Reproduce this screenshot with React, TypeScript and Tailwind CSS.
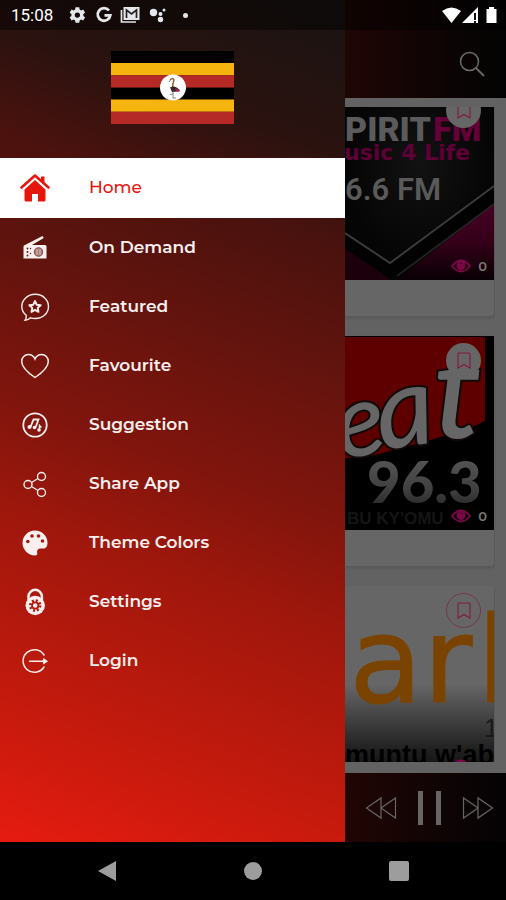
import type { ReactNode } from "react";

type Item = { label: string; icon: ReactNode };

const line = { fill: "none", stroke: "currentColor", strokeWidth: 1.5 } as const;

function Icon({ children }: { children: ReactNode }) {
  return (
    <svg viewBox="0 0 30 30" className="size-[30px] shrink-0" aria-hidden="true">
      {children}
    </svg>
  );
}

const home = (
  <Icon>
    <path d="M1.500 14.500 15 2.500l13.500 12" fill="none" stroke="currentColor" strokeWidth="2.600" strokeLinecap="round" strokeLinejoin="round" />
    <path d="M21 3.500h3.500v7L21 7z" fill="currentColor" />
    <path d="M15 7 4.500 16.500V27q0 1.500 1.500 1.500h6V21h6v7.500h6q1.500 0 1.500-1.500V16.500z" fill="currentColor" />
  </Icon>
);

const items: Item[] = [
  {
    label: "On Demand",
    icon: (
      <Icon>
        <path d="M5 12 22.500 3l1.200 2L12 12h13q1.500 0 1.500 1.500v12H3.500V13.500Q3.500 12 5 12z" fill="currentColor" />
        <circle cx="18.500" cy="19" r="4.600" fill="#a67a78" />
        <circle cx="18.500" cy="19" r="4.200" fill="none" stroke="#8d4f4c" strokeWidth="1" />
        <path d="M17 16v6M20 16v6" stroke="#d9c3c2" strokeWidth="1" />
        <g fill="#611612">
          <circle cx="7.500" cy="15.500" r=".9" />
          <circle cx="10.500" cy="15.500" r=".7" />
          <circle cx="7.500" cy="19" r=".9" />
          <circle cx="7.500" cy="22.500" r=".9" />
          <circle cx="10.500" cy="20.500" r=".7" />
        </g>
      </Icon>
    ),
  },
  {
    label: "Featured",
    icon: (
      <Icon>
        <path d="M6.200 23.200C3.500 21 1.800 18 1.800 14.500 1.800 8 7.500 2.300 15.200 2.300s13.300 5.500 13.300 12.200-5.700 12-13.300 12q-2.500 0-4.700-.7-2.500 2.500-5.500 2.500 1.700-2.300 1.200-5.100z" {...line} strokeWidth={1.4} />
        <path d="m15 9 1.700 3.700 4 .5-3 2.700.8 4-3.500-2-3.500 2 .8-4-3-2.700 4-.5z" {...line} strokeWidth={1.9} strokeLinejoin="round" />
      </Icon>
    ),
  },
  {
    label: "Favourite",
    icon: (
      <Icon>
        <path d="M15 26.500C9 22.500 1.700 17 1.700 10.500c0-4 3-7 6.600-7 3 0 5.500 1.700 6.700 4.500 1.200-2.800 3.700-4.500 6.700-4.500 3.600 0 6.600 3 6.600 7 0 6.500-7.300 12-13.300 16z" {...line} />
      </Icon>
    ),
  },
  {
    label: "Suggestion",
    icon: (
      <Icon>
        <circle cx="15" cy="15" r="11.700" {...line} strokeWidth={1.8} />
        <path d="m10.500 17 3-7.500h5l-3 8" {...line} strokeWidth={1.8} />
        <circle cx="9.500" cy="17" r="2" fill="currentColor" />
        <circle cx="14.500" cy="17.500" r="1.800" fill="currentColor" />
        <path d="M19.500 20v-4.500l2 2" {...line} />
        <circle cx="19" cy="20" r="1.800" fill="currentColor" />
      </Icon>
    ),
  },
  {
    label: "Share App",
    icon: (
      <Icon>
        <g {...line} strokeWidth={1.4}>
          <circle cx="8" cy="15.500" r="4" />
          <circle cx="21.500" cy="7.500" r="4" />
          <circle cx="21.500" cy="23.500" r="4" />
          <path d="m11.500 13.500 6.500-4M11.500 17.500l6.500 4" />
        </g>
      </Icon>
    ),
  },
  {
    label: "Theme Colors",
    icon: (
      <Icon>
        <path d="M15 2.500C8 2.500 2.500 8 2.500 15c0 6.500 5.500 12.500 12.500 12.500 2 0 2.500-1 2.200-2.500-.6-3 .8-4.500 3.300-4.500h3c2.800 0 4-2.500 4-5.500 0-7-5.500-12.500-12.500-12.500z" fill="currentColor" />
        <g fill="#a5170f">
          <circle cx="7.800" cy="13.500" r="1.800" />
          <circle cx="12" cy="8" r="1.800" />
          <circle cx="18.500" cy="8" r="1.800" />
          <circle cx="22.500" cy="13" r="1.800" />
        </g>
      </Icon>
    ),
  },
  {
    label: "Settings",
    icon: (
      <Icon>
        <path d="M8.500 13V9.500a6.700 6.700 0 0 1 13.400 0V13" fill="none" stroke="currentColor" strokeWidth="2.500" />
        <circle cx="15.200" cy="18.500" r="9.700" fill="currentColor" />
        <circle cx="15.200" cy="18.500" r="3.200" fill="none" stroke="#b0180f" strokeWidth="1.800" />
        <circle cx="15.200" cy="18.500" r="5" fill="none" stroke="#b0180f" strokeWidth="2.500" strokeDasharray="1.960 1.967" />
      </Icon>
    ),
  },
  {
    label: "Login",
    icon: (
      <Icon>
        <path d="M24 9A11.300 11.300 0 1 0 24 21" {...line} strokeLinecap="round" />
        <path d="M9.500 15.200h15" {...line} strokeLinecap="round" />
        <path d="m23.500 12 4.500 3.200-4.500 3.200-1-3.200z" fill="currentColor" />
      </Icon>
    ),
  },
];

function Flag() {
  return (
    <svg viewBox="0 0 123 73" className="h-[73px] w-[123px]" role="img" aria-label="Uganda">
      <path d="M0 0h123v12H0zM0 36.500h123v12H0z" fill="#000" />
      <path d="M0 12h123v12.300H0zM0 48.500h123v12.300H0z" fill="#f6b40e" />
      <path d="M0 24.300h123v12.200H0zM0 60.800h123V73H0z" fill="#b52a26" />
      <circle cx="62" cy="36.500" r="13" fill="#fff" />
      <path d="M59 29q3-3 4 0-1.500 4-1.500 8" fill="none" stroke="#8a6433" strokeWidth="1.500" />
      <path d="M59 29.500 58 31" stroke="#555" />
      <path d="M59 36.500q5-3 10 3l-2 1-6 .5z" fill="#38282a" />
      <path d="m64 37 5.500 3.500-4 0z" fill="#c01842" />
      <path d="M62 41v6m0-4-3 .5M62 47h3" fill="none" stroke="#777" strokeWidth=".9" />
    </svg>
  );
}

function StatusBar() {
  return (
    <header className="absolute inset-x-0 top-0 z-10 flex h-[30px] items-center bg-black/45 pr-2 pl-[11px] text-white">
      <time className="w-[57px] font-[Roboto,sans-serif] text-[17px] leading-[30px]">15:08</time>
      <svg viewBox="0 0 24 24" className="size-[18px] text-gray-200" aria-hidden="true">
        <path fill="currentColor" fillRule="evenodd" d="M20.400 13.200a8 8 0 0 0 0-2.400l2.400-1.900-2.500-4.100-2.800 1.100a8 8 0 0 0-2-1.200L15 1.800h-5l-.5 2.900a8 8 0 0 0-2 1.200L4.700 4.800 2.200 8.900l2.400 1.900a8 8 0 0 0 0 2.400l-2.400 1.900 2.500 4.100 2.800-1.100a8 8 0 0 0 2 1.200l.5 2.900h5l.5-2.900a8 8 0 0 0 2-1.200l2.800 1.100 2.500-4.100zM12.500 15.500a3.500 3.500 0 1 1 0-7 3.500 3.500 0 0 1 0 7z" />
      </svg>
      <svg viewBox="0 0 18 18" className="ml-[9px] size-[18px] text-gray-200" aria-hidden="true">
        <path d="M14 4.500A6.300 6.300 0 1 0 15.300 9.300H9.500" fill="none" stroke="currentColor" strokeWidth="2.800" />
      </svg>
      <svg viewBox="0 0 20 18" className="ml-[7px] h-[18px] w-5 text-gray-200" aria-hidden="true">
        <path d="M1.500 4v12H16" fill="none" stroke="currentColor" strokeWidth="1.700" />
        <path d="M3.500 1h16v13h-16z" fill="currentColor" />
        <path d="M6.500 12V4l5 4 5-4v8" fill="none" stroke="#27201f" strokeWidth="1.700" />
      </svg>
      <svg viewBox="0 0 18 18" className="ml-[9px] size-[18px] text-gray-200" aria-hidden="true">
        <g fill="currentColor">
          <circle cx="4.500" cy="6.500" r="3.700" />
          <circle cx="11.500" cy="8" r="2" />
          <circle cx="15" cy="4" r="1.500" />
          <circle cx="11.500" cy="13.500" r="2.700" />
        </g>
      </svg>
      <span className="ml-4 size-[5px] rounded-full bg-gray-200" />
      <svg viewBox="0 0 56 18" className="ml-auto h-[18px] w-14" aria-hidden="true">
        <g fill="#fff">
          <path d="M0 5q9.500-7 19 0l-9.500 12z" />
          <path d="M20 17 36 1v16z" />
          <path d="M47 1h5v2h2.500v14h-10V3H47z" />
        </g>
        <path d="M33 7v7M33 15v2" stroke="#111" strokeWidth="2" />
      </svg>
    </header>
  );
}

function Drawer() {
  return (
    <aside className="w-[345px] shrink-0 bg-[linear-gradient(200deg,#191413_0%,#2a120f_16%,#4a120e_26%,#80150d_54%,#a0170c_66%,#c41a0d_85%,#e61b10_100%)]">
      <div className="flex justify-center pt-[51px] pb-[34px]">
        <Flag />
      </div>
      <nav className="font-[Montserrat,Inter,sans-serif] text-[17px] font-semibold text-[#f8efee]">
        <a href="#home" aria-current="page" className="flex h-[60px] items-center gap-[39px] bg-white pl-5 font-medium text-[#e5160c]">
          {home}
          Home
        </a>
        <ul>
          {items.map((item) => (
            <li key={item.label}>
              <a href="#menu" className="flex h-[59px] items-center gap-[39px] pl-5">
                {item.icon}
                {item.label}
              </a>
            </li>
          ))}
        </ul>
      </nav>
    </aside>
  );
}

function SpiritArt() {
  return (
    <svg viewBox="0 0 149 194" preserveAspectRatio="xMidYMid slice" className="size-full" aria-hidden="true">
      <defs>
        <radialGradient id="spirit-bg" cy=".4">
          <stop offset="0" stopColor="#121212" />
          <stop offset="1" stopColor="#050505" />
        </radialGradient>
        <linearGradient id="spirit-pink" x2="0" y2="1">
          <stop offset="0" stopColor="#450023" />
          <stop offset=".5" stopColor="#350019" />
          <stop offset="1" stopColor="#080004" />
        </linearGradient>
      </defs>
      <path fill="url(#spirit-bg)" d="M0 0h149v194H0z" />
      <path d="M149 117v77H52z" fill="url(#spirit-pink)" />
      <path d="M0 157v37h45z" fill="#1c000c" />
      <path d="M0 154 45 184 149 107" fill="none" stroke="#020202" strokeWidth="14" />
      <path d="m52 190 97-72" fill="none" stroke="#262626" strokeWidth="1.500" />
      <path d="M0 147 45 177 149 100" fill="none" stroke="#3b3b3b" strokeWidth="2" />
      <g fontFamily="Roboto, sans-serif" fontWeight="900" fontSize="34">
        <text x="0" y="55" fill="#5b5b5b">PIRIT</text>
        <text x="88" y="55" fill="#650039">FM</text>
      </g>
      <text x="-1" y="74" fontSize="22" fontFamily="DejaVu Sans, sans-serif" fontWeight="700" fill="#5e0036">usic 4 Life</text>
      <text x="0" y="114" fontSize="31" fontFamily="Roboto, sans-serif" fontWeight="600" fill="#5a5a5a">6.6 FM</text>
    </svg>
  );
}

function BeatArt() {
  return (
    <svg viewBox="0 0 149 194" preserveAspectRatio="xMidYMid slice" className="size-full" aria-hidden="true">
      <defs>
        <linearGradient id="beat-fade" x2="0" y2="1">
          <stop offset="0" stopColor="#000" stopOpacity="0" />
          <stop offset=".5" stopColor="#000" stopOpacity=".3" />
          <stop offset="1" stopColor="#000" stopOpacity=".9" />
        </linearGradient>
      </defs>
      <path d="M0 0h149v194H0z" fill="#000" />
      <path d="M0 1h140v84q-20 10-38 14-32 10-52 14-22 9-50 9z" fill="#5e0000" />
      <g fontFamily="Lato, sans-serif" fontStyle="italic" fontWeight="500" fill="#666" stroke="#100a0a" strokeWidth="4" paintOrder="stroke">
        <text x="-5" y="122" fontSize="102" transform="rotate(-8 0 122)">e</text>
        <text x="36" y="114" fontSize="112" transform="rotate(-8 36 114)">a</text>
        <text x="88" y="102" fontSize="136">t</text>
      </g>
      <text x="22" y="167" fontSize="58" fontFamily="Lato, sans-serif" fontWeight="900" fill="#5a5a5a">96.3</text>
      <path d="M0 115h149v79H0z" fill="url(#beat-fade)" />
      <text x="2" y="188" fontSize="17" fontFamily="Liberation Sans, sans-serif" fontWeight="700" fill="#151515">BU KY'OMU</text>
    </svg>
  );
}

function ArkArt() {
  return (
    <svg viewBox="0 0 149 194" preserveAspectRatio="xMidYMid slice" className="size-full" aria-hidden="true">
      <defs>
        <linearGradient id="ark-fade" x2="0" y2="1">
          <stop offset="0" stopColor="#000" stopOpacity="0" />
          <stop offset=".7" stopColor="#000" stopOpacity=".7" />
          <stop offset="1" stopColor="#000" stopOpacity=".9" />
        </linearGradient>
      </defs>
      <path d="M0 0h149v194H0z" fill="#666" />
      <path d="M0 98h149v96H0z" fill="url(#ark-fade)" />
      <g fontFamily="DejaVu Sans, sans-serif" fill="#7b4300" stroke="#7b4300" strokeWidth="1" fontSize="120">
        <text x="4" y="116">a</text>
        <text x="78" y="116">r</text>
        <text x="132" y="116">k</text>
      </g>
      <text x="139" y="151" fontSize="26" fontFamily="Liberation Sans, sans-serif" fill="#1a1a1a">1</text>
      <text x="0" y="178" fontSize="27" fontFamily="Liberation Sans, sans-serif" fontWeight="700" fill="#000">muntu w'ab</text>
    </svg>
  );
}

function StationCard({ art, outlined = false }: { art: ReactNode; outlined?: boolean }) {
  return (
    <article className="shrink-0 rounded-r-sm border-r border-b border-[#5a5a5a] bg-[#666] shadow-sm">
      <div className="relative h-[194px] overflow-hidden">
        {art}
        <button
          type="button"
          aria-label="Bookmark"
          className={
            outlined
              ? "absolute top-[7px] right-[13px] flex size-[35px] items-center justify-center rounded-full border border-[#75364c] text-[#841b43]"
              : "absolute top-[7px] right-[13px] flex size-[35px] items-center justify-center rounded-full bg-[#666] text-[#841b43]"
          }
        >
          <svg viewBox="0 0 14 17" className="h-[17px] w-[14px]" aria-hidden="true">
            <path d="M1 16V2q0-1 1-1h10q1 0 1 1v14l-6-3.500z" fill="none" stroke="currentColor" strokeWidth="1.200" />
          </svg>
        </button>
        <div className="absolute right-[7px] bottom-[5px] flex items-center gap-[7px] font-[Montserrat,Inter,sans-serif] text-[13px] leading-[18px] font-semibold text-[#777]">
          <svg viewBox="0 0 20 14" className="h-[14px] w-5 text-[#7c0747]" aria-hidden="true">
            <path d="M1 7q9-11 18 0-9 11-18 0z" fill="none" stroke="currentColor" strokeWidth="1.800" />
            <circle cx="10" cy="6.500" r="4.500" fill="currentColor" />
            <path d="M8 5q2-2.500 4 0" fill="none" stroke="#4c0029" />
          </svg>
          0
        </div>
      </div>
      <div className="h-9" />
    </article>
  );
}

function Player() {
  return (
    <footer className="flex h-[69px] shrink-0 items-center justify-between bg-linear-to-r from-[#210504] to-[#050304] pr-3 pl-5 text-[#666]">
      <button type="button" aria-label="Previous">
        <svg viewBox="0 0 32 24" className="h-6 w-8" aria-hidden="true">
          <path d="M16 2v20L1.500 12zM30.500 2v20L16 12z" {...line} strokeWidth={1.2} />
        </svg>
      </button>
      <button type="button" aria-label="Pause" className="flex gap-[13px]">
        <span className="h-[34px] w-[5px] bg-[#666]" />
        <span className="h-[34px] w-[5px] bg-[#666]" />
      </button>
      <button type="button" aria-label="Next">
        <svg viewBox="0 0 32 24" className="h-6 w-8" aria-hidden="true">
          <path d="M1.500 2v20L16 12zM16 2v20l14.500-10z" {...line} strokeWidth={1.2} />
        </svg>
      </button>
    </footer>
  );
}

export default function App() {
  return (
    <div className="relative flex h-screen flex-col bg-black">
      <StatusBar />
      <div className="flex min-h-0 flex-1">
        <Drawer />
        <main className="flex min-w-0 flex-1 flex-col bg-[#626262]">
          <div className="flex h-[98px] shrink-0 items-center justify-end bg-linear-to-r from-[#1f0605] to-[#040303] pt-[30px] pr-[21px]">
            <button type="button" aria-label="Search" className="text-[#6a6a6a]">
              <svg viewBox="0 0 26 26" className="size-[26px]" aria-hidden="true">
                <circle cx="10.500" cy="10.500" r="9" {...line} />
                <path d="m17 17 8 8" {...line} strokeWidth={1.8} />
              </svg>
            </button>
          </div>
          <div className="mt-[9px] mr-[11px] mb-[11px] min-h-0 flex-1 overflow-hidden">
            <div className="-mt-[21px] flex flex-col gap-[19px]">
              <StationCard art={<SpiritArt />} />
              <StationCard art={<BeatArt />} />
              <StationCard art={<ArkArt />} outlined />
            </div>
          </div>
          <Player />
        </main>
      </div>
      <footer className="flex h-[58px] shrink-0 items-center justify-center gap-[127px] text-[#9d9d9d]">
        <button type="button" aria-label="Back">
          <svg viewBox="0 0 20 22" className="h-[22px] w-5" aria-hidden="true">
            <path d="M1 11 19 1v20z" fill="currentColor" />
          </svg>
        </button>
        <button type="button" aria-label="Home screen" className="size-[18px] rounded-full bg-[#9d9d9d]" />
        <button type="button" aria-label="Recent apps" className="size-5 rounded-xs bg-[#9d9d9d]" />
      </footer>
    </div>
  );
}
